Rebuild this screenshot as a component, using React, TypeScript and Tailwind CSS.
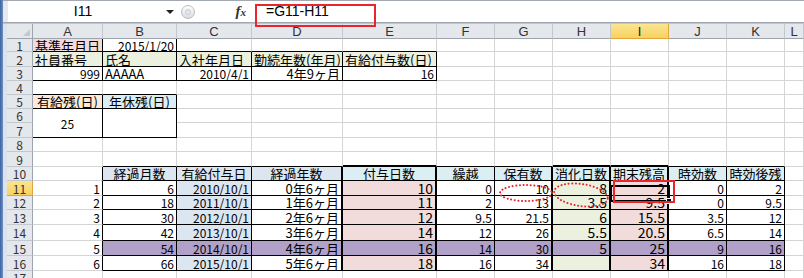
import React from "react";

const COLS = ["A", "B", "C", "D", "E", "F", "G", "H", "I", "J", "K", "L"];
const ROWS = [1, 2, 3, 4, 5, 6, 7, 8, 9, 10, 11, 12, 13, 14, 15, 16, 17];

type Cell = { t?: string; a?: "l" | "r" | "c"; bg?: string; big?: boolean; num?: boolean };

const PINK = "bg-[#f2dcdb]";
const GREEN = "bg-[#ebf1de]";
const BLUE = "bg-[#dce6f1]";
const CYAN = "bg-[#daeef3]";
const PURPLE = "bg-[#b1a0c7]";

const months = ["6", "18", "30", "42", "54", "66"];
const dates = ["2010/10/1", "2011/10/1", "2012/10/1", "2013/10/1", "2014/10/1", "2015/10/1"];
const years = ["0年6ヶ月", "1年6ヶ月", "2年6ヶ月", "3年6ヶ月", "4年6ヶ月", "5年6ヶ月"];
const grant = ["10", "11", "12", "14", "16", "18"];
const carry = ["0", "2", "9.5", "12", "14", "16"];
const hold = ["10", "13", "21.5", "26", "30", "34"];
const used = ["8", "3.5", "6", "5.5", "5", ""];
const rest = ["2", "9.5", "15.5", "20.5", "25", "34"];
const expire = ["0", "0", "3.5", "6.5", "9", "16"];
const after = ["2", "9.5", "12", "14", "16", "18"];
const heads = ["経過月数", "有給付与日", "経過年数", "付与日数", "繰越", "保有数", "消化日数", "期末残高", "時効数", "時効後残"];

function getCell(r: number, c: number): Cell {
  if (r === 1) {
    if (c === 0) return { t: "基準年月日", a: "l", bg: PINK };
    if (c === 1) return { t: "2015/1/20", a: "r", num: true };
  }
  if (r === 2 && c <= 4) {
    return { t: ["社員番号", "氏名", "入社年月日", "勤続年数(年月)", "有給付与数(日)"][c], a: "l", bg: GREEN };
  }
  if (r === 3) {
    if (c === 0) return { t: "999", a: "r", num: true };
    if (c === 1) return { t: "AAAAA", a: "l" };
    if (c === 2) return { t: "2010/4/1", a: "r", num: true };
    if (c === 3) return { t: "4年9ヶ月", a: "r" };
    if (c === 4) return { t: "16", a: "r", num: true };
  }
  if (r === 5) {
    if (c === 0) return { t: "有給残(日)", a: "c", bg: "bg-[#fde9d9]" };
    if (c === 1) return { t: "年休残(日)", a: "c", bg: CYAN };
  }
  if (r === 6 && c === 0) return { t: "25", a: "c", num: true };
  if (r === 10 && c >= 1 && c <= 10) return { t: heads[c - 1], a: "c", bg: c <= 3 ? BLUE : CYAN };
  if (r >= 11 && r <= 16) {
    const i = r - 11;
    const p = r === 15;
    switch (c) {
      case 0: return { t: String(i + 1), a: "r", num: true };
      case 1: return { t: months[i], a: "r", num: true, bg: p ? PURPLE : undefined };
      case 2: return { t: dates[i], a: "r", num: true, bg: p ? PURPLE : BLUE };
      case 3: return { t: years[i], a: "r", bg: p ? PURPLE : undefined };
      case 4: return { t: grant[i], a: "r", big: true, bg: p ? PURPLE : PINK };
      case 5: return { t: carry[i], a: "r", num: true, bg: p ? PURPLE : undefined };
      case 6: return { t: hold[i], a: "r", num: true, bg: p ? PURPLE : undefined };
      case 7: return { t: used[i], a: "r", big: true, bg: p ? PURPLE : GREEN };
      case 8: return { t: rest[i], a: "r", big: true, bg: p ? PURPLE : PINK };
      case 9: return { t: expire[i], a: "r", num: true, bg: p ? PURPLE : undefined };
      case 10: return { t: after[i], a: "r", num: true, bg: p ? PURPLE : undefined };
    }
  }
  return {};
}

// right border of cell
function rb(r: number, c: number) {
  if (r === 1 && c <= 1) return "b";
  if ((r === 2 || r === 3) && c <= 4) return "b";
  if (r >= 5 && r <= 7 && c <= 1) return "b";
  if (r >= 10 && r <= 16) {
    if ([3, 4, 6, 7, 8].includes(c)) return "B";
    if (c <= 10) return "b";
  }
  return "";
}

// bottom border of cell
function bb(r: number, c: number) {
  if (r >= 1 && r <= 3 && c <= 4) return "b";
  if (r === 4 && c <= 1) return "b";
  if ((r === 5 || r === 7) && c <= 1) return "b";
  if (r === 9 && c >= 1 && c <= 10) return [4, 7, 8].includes(c) ? "B" : "b";
  if (r >= 10 && r <= 16 && c >= 1 && c <= 10) return "b";
  return "";
}

function borderCls(r: number, c: number, rowForBottom: number) {
  const R = rb(r, c);
  const B = bb(rowForBottom, c);
  const right = R === "B" ? "border-r-2 border-r-black" : R === "b" ? "border-r border-r-black" : "border-r border-r-[#d4d4d4]";
  const bottom = B === "B" ? "border-b-2 border-b-black" : B === "b" ? "border-b border-b-black" : "border-b border-b-[#d4d4d4]";
  return right + " " + bottom;
}

function SheetCell({ r, c }: { r: number; c: number }) {
  if (r === 7 && c <= 1) return null; // merged into row 6
  const merged = r === 6 && c <= 1;
  const cell = getCell(r, c);
  const align = cell.a === "r" ? "justify-end" : cell.a === "c" ? "justify-center" : "justify-start";
  const size = cell.big ? "text-[14px]" : cell.num ? "text-[12px]" : "text-[13px]";
  return (
    <div
      className={`flex items-center whitespace-nowrap px-[2px] leading-[11px] text-black ${align} ${size} ${cell.bg ?? "bg-white"} ${borderCls(r, c, merged ? 7 : r)} ${merged ? "row-span-2" : ""}`}
    >
      {cell.t}
    </div>
  );
}

function RowHead({ r }: { r: number }) {
  const sel = r === 11;
  return (
    <div
      className={`flex items-center justify-center text-[12px] leading-[11px] border-r border-b ${
        sel
          ? "bg-gradient-to-b from-[#fbe592] to-[#f7d15c] border-[#e2a43c] text-[#333]"
          : "bg-[#e4e7ec] border-r-[#9da4ad] border-b-[#c3c8cf] text-[#333]"
      }`}
    >
      {r}
    </div>
  );
}

export default function App() {
  return (
    <div className="relative w-[804px] h-[278px] overflow-hidden bg-white flex font-['Noto_Sans_CJK_JP',sans-serif]">
      <div className="w-[3px] bg-gradient-to-r from-[#3c64a3] to-[#6d8fc4] shrink-0" />
      <div className="flex-1 flex flex-col bg-[#e6e9ee]">
        {/* ribbon bottom strip */}
        <div className="h-[3px] flex border-b border-b-[#a3a9b1] bg-[#dfe3e8]">
          <div className="w-[446px] border-r border-r-[#a3a9b1]" />
          <div className="w-[293px] border-r border-r-[#a3a9b1]" />
        </div>
        {/* formula bar */}
        <div className="h-[22px] flex items-center">
          <div className="w-[5px] h-full bg-[#e6e9ee]" />
          <div className="w-[170px] h-full bg-white flex items-center">
            <span className="flex-1 text-center font-['Liberation_Sans',sans-serif] text-[14px] text-black pr-[8px]">I11</span>
            <span className="w-0 h-0 mr-[4px] border-l-[4px] border-r-[4px] border-t-[4px] border-l-transparent border-r-transparent border-t-[#222]" />
          </div>
          <div className="w-[19px] h-full bg-white flex items-center justify-center">
            <div className="w-[14px] h-[14px] rounded-full border border-[#b7bcc3] bg-gradient-to-b from-white to-[#d9dde2] flex items-center justify-center">
              <div className="w-[6px] h-[6px] rounded-full bg-[#e6e8eb] border border-[#c9cdd2]" />
            </div>
          </div>
          <div className="w-[57px] h-full bg-white flex items-center justify-end pr-[8px]">
            <span className="font-['Liberation_Serif',serif] italic font-bold text-[15px] text-[#333] leading-none">
              f<span className="text-[11px]">x</span>
            </span>
          </div>
          <div className="flex-1 h-full bg-white flex items-center pl-[12px]">
            <span className="font-['Liberation_Sans',sans-serif] text-[14px] text-black">=G11-H11</span>
          </div>
        </div>
        <div className="h-[4px] border-t border-t-[#a1a8b0] border-b border-b-[#bfc5cc] bg-[#eef0f3]" />
        {/* sheet */}
        <div className="flex">
          <div className="w-[4px] bg-[#dde3eb]" />
          <div className="grid grid-cols-[26px_70px_74px_75px_91px_94px_58px_58px_58px_58px_58px_58px_19px] grid-rows-[15px_13px_15px_14px_14px_14px_14px_15px_14px_15px_14px_15px_14px_15px_16px_15px_15px_14px]">
            <div className="bg-[#e4e7ec] border-r border-r-[#9da4ad] border-b border-b-[#9da4ad] flex items-end justify-end p-[2px]">
              <div className="w-0 h-0 border-l-[7px] border-l-transparent border-b-[7px] border-b-[#c4c9cf]" />
            </div>
            {COLS.map((l) => (
              <div
                key={l}
                className={`flex items-center justify-center text-[13px] leading-none border-r border-b font-['Liberation_Sans',sans-serif] ${
                  l === "I"
                    ? "bg-gradient-to-b from-[#fbe592] to-[#f7d15c] border-[#e2a43c] text-[#222]"
                    : "bg-[#e4e7ec] border-r-[#c3c8cf] border-b-[#9da4ad] text-[#333]"
                }`}
              >
                {l}
              </div>
            ))}
            {ROWS.map((r) => (
              <React.Fragment key={r}>
                <RowHead r={r} />
                {COLS.map((_, c) => (
                  <SheetCell key={c} r={r} c={c} />
                ))}
              </React.Fragment>
            ))}
          </div>
        </div>
      </div>

      {/* active cell I11 */}
      <div className="absolute left-[610px] top-[185px] w-[60px] h-[17px] border-2 border-black" />
      <div className="absolute left-[666px] top-[198px] w-[6px] h-[6px] bg-black border border-white" />

      {/* annotations */}
      <div className="absolute left-[255px] top-[4px] w-[121px] h-[23px] border-2 border-[#e8262b]" />
      <div className="absolute left-[613px] top-[180px] w-[62px] h-[23px] border-2 border-[#e8262b]" />
      <svg className="absolute left-0 top-0 pointer-events-none" width="804" height="278">
        <ellipse cx="526" cy="193" rx="26" ry="8" fill="none" stroke="#e8262b" strokeWidth="2" strokeDasharray="0.1 3.5" strokeLinecap="round" />
        <ellipse cx="581" cy="195" rx="27" ry="11" transform="rotate(8 581 195)" fill="none" stroke="#e8262b" strokeWidth="2" strokeDasharray="0.1 3.5" strokeLinecap="round" />
      </svg>
    </div>
  );
}
